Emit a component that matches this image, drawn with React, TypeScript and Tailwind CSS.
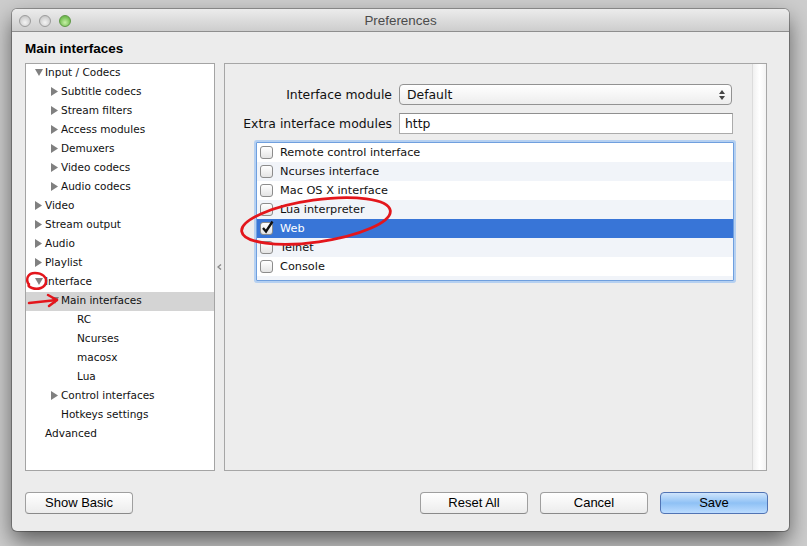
import React from 'react';

type Arrow = 'down' | 'right' | null;

const tree: { label: string; level: number; arrow: Arrow; selected?: boolean }[] = [
  { label: 'Input / Codecs', level: 0, arrow: 'down' },
  { label: 'Subtitle codecs', level: 1, arrow: 'right' },
  { label: 'Stream filters', level: 1, arrow: 'right' },
  { label: 'Access modules', level: 1, arrow: 'right' },
  { label: 'Demuxers', level: 1, arrow: 'right' },
  { label: 'Video codecs', level: 1, arrow: 'right' },
  { label: 'Audio codecs', level: 1, arrow: 'right' },
  { label: 'Video', level: 0, arrow: 'right' },
  { label: 'Stream output', level: 0, arrow: 'right' },
  { label: 'Audio', level: 0, arrow: 'right' },
  { label: 'Playlist', level: 0, arrow: 'right' },
  { label: 'Interface', level: 0, arrow: 'down' },
  { label: 'Main interfaces', level: 1, arrow: 'down', selected: true },
  { label: 'RC', level: 2, arrow: null },
  { label: 'Ncurses', level: 2, arrow: null },
  { label: 'macosx', level: 2, arrow: null },
  { label: 'Lua', level: 2, arrow: null },
  { label: 'Control interfaces', level: 1, arrow: 'right' },
  { label: 'Hotkeys settings', level: 1, arrow: null },
  { label: 'Advanced', level: 0, arrow: null },
];

const modules = [
  { label: 'Remote control interface', checked: false },
  { label: 'Ncurses interface', checked: false },
  { label: 'Mac OS X interface', checked: false },
  { label: 'Lua interpreter', checked: false },
  { label: 'Web', checked: true },
  { label: 'Telnet', checked: false },
  { label: 'Console', checked: false },
];

const pad = ['pl-[8px]', 'pl-[24px]', 'pl-[40px]'];

function Triangle({ dir }: { dir: Arrow }) {
  if (dir === 'down')
    return (
      <svg width="8" height="7" viewBox="0 0 8 7" className="ml-[1px]">
        <polygon points="0,0 8,0 4,7" fill="#808080" />
      </svg>
    );
  if (dir === 'right')
    return (
      <svg width="7" height="9" viewBox="0 0 7 9" className="ml-[1px]">
        <polygon points="0,0 7,4.5 0,9" fill="#808080" />
      </svg>
    );
  return null;
}

function Light({ green }: { green?: boolean }) {
  return (
    <div
      className={
        green
          ? 'h-[12px] w-[12px] rounded-full border border-[#5f9846] bg-[radial-gradient(circle_at_50%_65%,#c8f0a8,#7cc45a_60%,#5ea43f)]'
          : 'h-[12px] w-[12px] rounded-full border border-[#9c9c9c] bg-[radial-gradient(circle_at_50%_65%,#f4f4f4,#d2d2d2_60%,#b9b9b9)]'
      }
    />
  );
}

function Checkbox({ checked }: { checked: boolean }) {
  return (
    <div className="relative h-[13px] w-[13px] shrink-0 rounded-[3px] border border-[#8c8c8c] bg-gradient-to-b from-white to-[#e4e4e4]">
      {checked && (
        <svg width="13" height="14" viewBox="0 0 13 14" className="absolute -top-[3px] left-[0px]">
          <path d="M2 8 L5 11.5 L11.5 1.5" fill="none" stroke="#111" strokeWidth="2.3" />
        </svg>
      )}
    </div>
  );
}

function Button({ children, primary }: { children: React.ReactNode; primary?: boolean }) {
  return (
    <div
      className={
        primary
          ? 'flex h-[22px] w-[108px] items-center justify-center rounded-[4px] border border-[#5174b4] bg-gradient-to-b from-[#cfe5fc] via-[#8fc1f5] to-[#bcdcff] text-[13px] text-black'
          : 'flex h-[22px] w-[108px] items-center justify-center rounded-[4px] border border-[#9f9f9f] border-b-[#8a8a8a] bg-gradient-to-b from-white to-[#ececec] text-[13px] text-black'
      }
      style={{ fontFamily: '"Liberation Sans", Arial, sans-serif' }}
    >
      {children}
    </div>
  );
}

export default function App() {
  return (
    <div className="relative h-[546px] w-[807px] overflow-hidden bg-[#cdcdcd] pl-[12px] pt-[9px]">
      <div className="flex h-[522px] w-[777px] flex-col overflow-hidden rounded-[5px] bg-[#ececec] shadow-[0_0_0_1px_rgba(0,0,0,0.28),0_10px_22px_rgba(0,0,0,0.55)]">
        {/* title bar */}
        <div className="grid h-[23px] shrink-0 grid-cols-[1fr_auto_1fr] items-center border-b border-[#8e8e8e] bg-gradient-to-b from-[#ececec] to-[#cdcdcd]">
          <div className="flex items-center gap-[8px] pl-[7px] pt-[1px]">
            <Light />
            <Light />
            <Light green />
          </div>
          <div
            className="pt-[2px] text-[13.4px] text-[#4b4b4b]"
            style={{ fontFamily: '"Liberation Sans", Arial, sans-serif' }}
          >
            Preferences
          </div>
          <div />
        </div>

        {/* section header */}
        <div
          className="flex h-[31px] shrink-0 items-center pl-[13px] pt-[4px] text-[13.5px] font-bold text-black"
          style={{ fontFamily: '"Liberation Sans", Arial, sans-serif' }}
        >
          Main interfaces
        </div>

        {/* main area */}
        <div className="flex h-[408px] shrink-0 pl-[13px] pr-[22px]" style={{ fontFamily: '"DejaVu Sans", Verdana, sans-serif' }}>
          {/* tree */}
          <div className="flex w-[190px] flex-col border border-[#a4a4a4] bg-white text-[10.5px] text-[#111]">
            {tree.map((t) => (
              <div
                key={t.label}
                className={`flex h-[19px] shrink-0 items-center pb-[2px] ${pad[t.level]} ${t.selected ? 'bg-[#d4d4d4]' : ''}`}
              >
                <div className="flex w-[11px] items-center">
                  <Triangle dir={t.arrow} />
                </div>
                <span>{t.label}</span>
              </div>
            ))}
          </div>

          {/* splitter */}
          <div className="flex w-[9px] items-center justify-center">
            <svg width="5" height="6" viewBox="0 0 5 6">
              <path d="M4 0.5 L1 3 L4 5.5" fill="none" stroke="#8a8a8a" strokeWidth="1.4" />
            </svg>
          </div>

          {/* settings panel */}
          <div className="flex w-[543px] border border-[#a6a6a6] bg-[#ededed]">
            <div className="flex flex-1 flex-col pt-[20px]">
              <div className="flex h-[21px] items-center">
                <div className="w-[167px] pt-[1px] text-right text-[12.4px] text-[#111]">Interface module</div>
                <div className="ml-[7px] flex h-[21px] w-[333px] items-center justify-between rounded-[4px] border border-[#929292] bg-gradient-to-b from-white to-[#ededed] pl-[7px] pr-[6px] pt-[1px] text-[12.4px] text-[#111]">
                  <span>Default</span>
                  <svg width="6" height="10" viewBox="0 0 6 10">
                    <polygon points="0,4 6,4 3,0" fill="#444" />
                    <polygon points="0,6 6,6 3,10" fill="#444" />
                  </svg>
                </div>
              </div>
              <div className="mt-[8px] flex h-[21px] items-center">
                <div className="w-[167px] pt-[1px] text-right text-[12.4px] text-[#111]">Extra interface modules</div>
                <div className="ml-[7px] flex h-[21px] w-[334px] items-center border border-[#ababab] border-t-[#8f8f8f] bg-white pl-[5px] pt-[1px] text-[12.4px] text-[#111]">
                  http
                </div>
              </div>
              <div className="ml-[31px] mt-[8px] flex h-[139px] w-[478px] flex-col overflow-hidden rounded-[1px] border border-[#6f9fde] bg-[#f1f4f9] text-[11.3px] shadow-[0_0_0_2px_#b5d0f1]">
                {modules.map((m, i) => {
                  const bg = m.checked ? 'bg-[#3875d7] text-white' : i % 2 === 1 ? 'bg-[#f1f4f9] text-[#111]' : 'bg-white text-[#111]';
                  return (
                    <div key={m.label} className={`flex h-[19px] shrink-0 items-center gap-[7px] pl-[3px] ${bg}`}>
                      <Checkbox checked={m.checked} />
                      <span className="pt-[1px]">{m.label}</span>
                    </div>
                  );
                })}
              </div>
            </div>
            <div className="w-[14px] border-l border-[#dcdcdc] bg-gradient-to-r from-[#f1f1f1] via-white to-[#f3f3f3]" />
          </div>
        </div>

        {/* footer */}
        <div className="flex pl-[13px] pr-[21px] pt-[21px]">
          <Button>Show Basic</Button>
          <div className="flex-1" />
          <div className="flex gap-[12px]">
            <Button>Reset All</Button>
            <Button>Cancel</Button>
            <Button primary>Save</Button>
          </div>
        </div>
      </div>

      {/* hand-drawn red annotations */}
      <svg className="pointer-events-none absolute left-0 top-0" width="807" height="546" viewBox="0 0 807 546">
        <g fill="none" stroke="#e3161c" strokeLinecap="round" strokeLinejoin="round">
          <path d="M29 285 C25 279 28 273 35 273 C42 273 47 277 46 282 C45 288 38 290 32 288 C29 287 28 286 29 284" strokeWidth="2.5" />
          <path d="M29 303 L57 300" strokeWidth="2.5" />
          <path d="M48 295 L57 300 L49 306" strokeWidth="2.5" />
          <ellipse cx="316" cy="221" rx="75" ry="21" transform="rotate(-8 316 221)" strokeWidth="2.8" />
        </g>
      </svg>
    </div>
  );
}
